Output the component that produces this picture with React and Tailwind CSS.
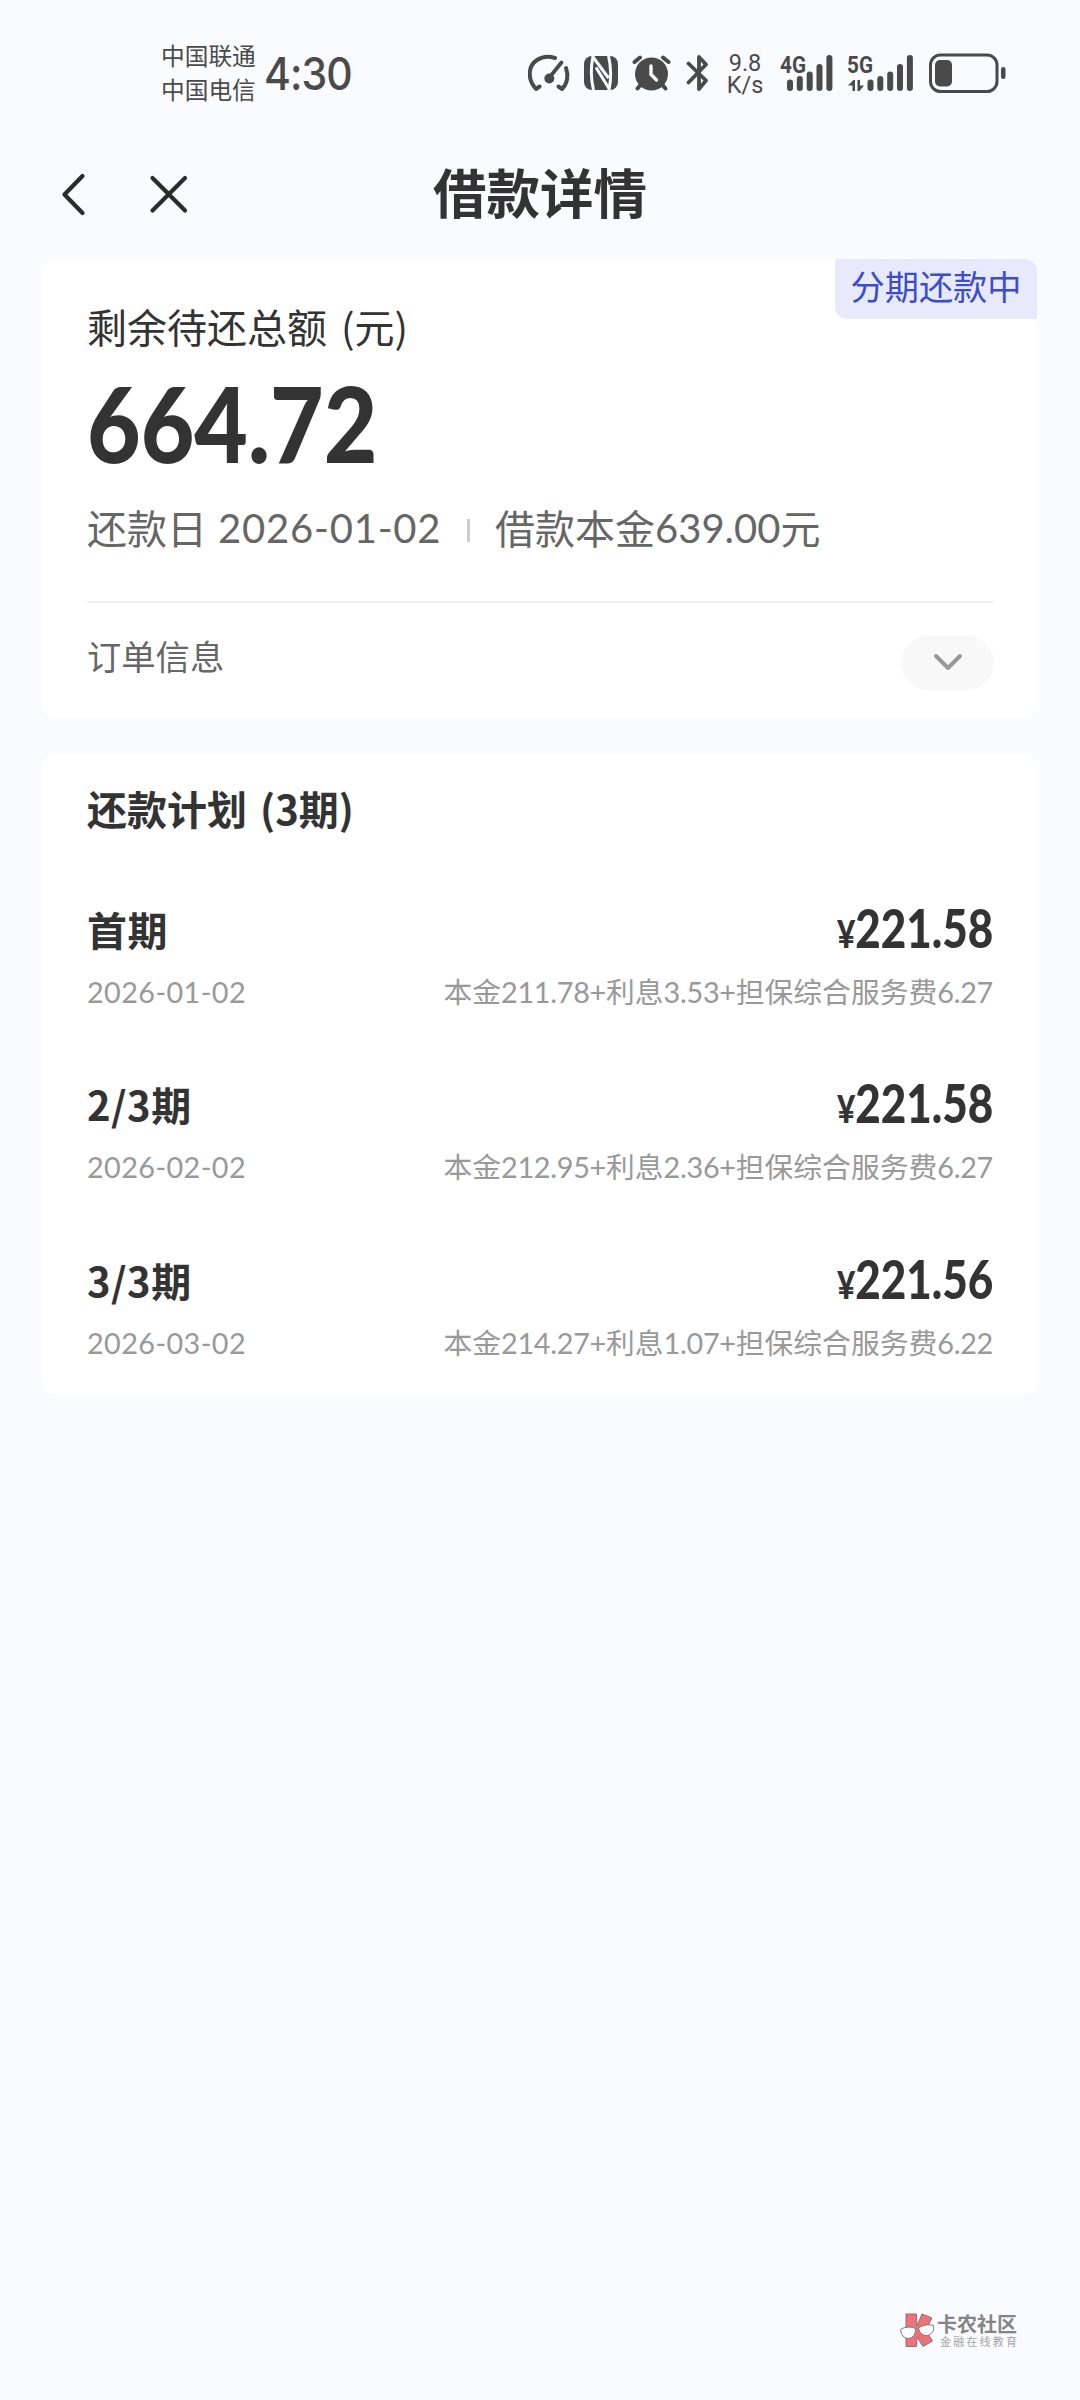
import React from 'react';

const plan = [
  { id: 1, name: '首期', date: '2026-01-02', amount: '221.58', detail: ['本金', '211.78+', '利息', '3.53+', '担保综合服务费', '6.27'] },
  { id: 2, name: '2/3期', date: '2026-02-02', amount: '221.58', detail: ['本金', '212.95+', '利息', '2.36+', '担保综合服务费', '6.27'] },
  { id: 3, name: '3/3期', date: '2026-03-02', amount: '221.56', detail: ['本金', '214.27+', '利息', '1.07+', '担保综合服务费', '6.22'] },
];

const SpeedIcon = () => (
  <svg width="44" height="40" viewBox="0 0 44 40" fill="none" stroke="#4a4a4a" strokeWidth="4" strokeLinecap="round" strokeLinejoin="round">
    <path d="M11.5 33.5 L8 36 C-1 26 0 13 9 7 C15 3 21 3 27 5" />
    <path d="M38 15 C41 23 39 31 34 36 L30.500 33.500" />
    <path d="M21 25 L33.500 9.500" strokeWidth="3.8" />
    <circle cx="21.3" cy="25.500" r="3" fill="#4a4a4a" />
  </svg>
);

const NfcIcon = () => (
  <svg width="34" height="40" viewBox="0 0 34 40" fill="none">
    <rect y="3" width="34" height="34" rx="8" fill="#4a4a4a" />
    <g stroke="#fafbff" strokeWidth="3">
      <path d="M9 3 C6.800 14 6.800 26 9.500 37" />
      <path d="M24.500 3 C27.200 14 27.200 26 25 37" />
      <path d="M9 4 L24.500 25" />
      <path d="M12 14.500 L25 35.500" />
    </g>
  </svg>
);

const AlarmIcon = () => (
  <svg width="40" height="40" viewBox="0 0 40 40" fill="none" stroke="#4a4a4a" strokeWidth="4" strokeLinecap="round">
    <circle cx="19.5" cy="21" r="16.5" fill="#4a4a4a" stroke="none" />
    <path d="M2.5 9 L8 4.500 M36.500 9 L31 4.500" />
    <path d="M8.500 32 L5.500 35.500 M30.500 32 L33.500 35.500" />
    <path d="M19 13 V21.500 L24.500 27" stroke="#fafbff" strokeWidth="3.4" />
  </svg>
);

const BluetoothIcon = () => (
  <svg width="24" height="40" viewBox="0 0 24 40" fill="none" stroke="#4a4a4a" strokeWidth="3.8" strokeLinecap="round" strokeLinejoin="round">
    <path d="M2.500 10.500 L20 27.500 L13 36 V4 L20 11.500 L2.500 29.500" />
  </svg>
);

const bars = [
  { x: 0, top: 26.500 },
  { x: 9.800, top: 23 },
  { x: 19.700, top: 18.500 },
  { x: 29.500, top: 11 },
  { x: 39.400, top: 2 },
];

const Signal = ({ label, arrows }) => (
  <svg className="-mt-[6px]" width="66" height="46" viewBox="0 -6 66 46" fill="#4a4a4a">
    <text x="0" y="20" fontFamily="Roboto, sans-serif" fontWeight="700" fontSize="24" textLength="26" lengthAdjust="spacingAndGlyphs">
      {label}
    </text>
    {arrows && <path d="M5.500 27 V38 H8 V27 L6.500 27 L1 32.500 H5.500 Z M10.500 27 H13 V32.500 H17 L12.500 38 H10.500 Z" />}
    {bars.map((b) => (
      <rect key={b.x} x={b.x + (arrows ? 20.500 : 7)} y={b.top} width="6" height={38 - b.top} rx="3" />
    ))}
  </svg>
);

const BatteryIcon = () => (
  <svg width="79" height="40" viewBox="0 0 79 40" fill="none">
    <rect x="2.500" y="2" width="66.500" height="36.500" rx="10" stroke="#4a4a4a" strokeWidth="3" />
    <rect x="7" y="7" width="17" height="26.500" rx="5" fill="#4a4a4a" />
    <rect x="73" y="14" width="4.500" height="12" rx="2.200" fill="#4a4a4a" />
  </svg>
);

const StatusBar = () => (
  <div className="flex h-[144px] items-start pl-[161px] pt-[38px] text-[#4a4a4a]">
    <div className="w-[103px] whitespace-nowrap text-[23.700px] leading-[34px]">
      <div>中国联通</div>
      <div>中国电信</div>
    </div>
    <div className="w-[264px] pt-[2px] font-['Inter','Noto_Sans_CJK_SC',sans-serif] text-[45px] font-medium leading-[68px]">
      <span className="inline-block origin-left scale-x-[0.91] tracking-[-1px]">4:30</span>
    </div>
    <div className="flex pt-[15px]">
      <SpeedIcon />
      <div className="ml-[12px]"><NfcIcon /></div>
      <div className="ml-[14px]"><AlarmIcon /></div>
      <div className="ml-[14px]"><BluetoothIcon /></div>
      <div className="-mt-[1px] ml-[16px] w-[38px] text-center font-['Roboto',sans-serif] text-[23.500px] leading-[22px]">
        <div>9.8</div>
        <div>K/s</div>
      </div>
      <div className="ml-[16px]"><Signal label="4G" /></div>
      <div className="ml-[1px]"><Signal label="5G" arrows /></div>
      <div className="ml-[15px]"><BatteryIcon /></div>
    </div>
  </div>
);

const NavBar = () => (
  <div className="grid h-[115px] grid-cols-3 items-start">
    <div className="flex pl-[60px] pt-[28px]">
      <svg width="28" height="44" viewBox="0 0 28 44" fill="none" stroke="#2b2b2b" strokeWidth="4.200" strokeLinecap="round" strokeLinejoin="round">
        <path d="M22.500 4 L4.500 22.500 L22.500 41" />
      </svg>
      <svg className="ml-[61px]" width="40" height="44" viewBox="0 0 40 44" fill="none" stroke="#2b2b2b" strokeWidth="4.200" strokeLinecap="round">
        <path d="M3.500 6 L36 38.500 M36 6 L3.500 38.500" />
      </svg>
    </div>
    <h1 className="pt-[15px] text-center text-[53.500px] font-bold leading-[64px]">借款详情</h1>
  </div>
);

const Summary = () => (
  <section className="relative h-[459px] rounded-xl bg-white pl-[45px] pr-[43px] pt-[42px]">
    <div className="absolute right-0 top-0 h-[60px] w-[202px] rounded-bl-xl rounded-tr-xl bg-[#e8eafc] text-center text-[34.200px] leading-[52px] text-[#3a4dcb]">
      分期还款中
    </div>
    <p className="text-[40px] leading-[50px] [word-spacing:5px]">剩余待还总额 (元)</p>
    <p className="mt-[19px] h-[106px] font-['Lato',sans-serif] text-[104px] font-black leading-[106px]">
      <span className="inline-block origin-left scale-x-[0.89]">664.72</span>
    </p>
    <div className="mt-[26px] flex h-[50px] items-center whitespace-nowrap text-[40px] leading-[50px] text-[#666]">
      <span>还款日</span>
      <span className="ml-[11px] w-[249px] pt-[2px] font-['Lato',sans-serif] tracking-[0.800px]">2026-01-02</span>
      <span className="mt-[7px] h-[23px] w-[3px] bg-[#ccc]" />
      <span className="ml-[25px]">借款本金</span>
      <span className="pt-[2px] font-['Lato',sans-serif]">639.00</span>
      <span>元</span>
    </div>
    <div className="mt-[49px] flex justify-between border-t-2 border-[#f2f2f2] pt-[32px]">
      <span className="-mt-[2px] text-[34.300px] leading-[44px] text-[#666]">订单信息</span>
      <button className="mt-px flex h-[54px] w-[93px] justify-center rounded-full bg-[#f8f8f8] pt-[15px]">
        <svg width="30" height="22" viewBox="0 0 30 22" fill="none" stroke="#999" strokeWidth="4" strokeLinecap="round" strokeLinejoin="round">
          <path d="M3 5 L15 17 L27 5" />
        </svg>
      </button>
    </div>
  </section>
);

const PlanRow = ({ item }) => (
  <div className="h-[175.300px]">
    <div className="flex h-[60px] items-center justify-between">
      <span className="ml-px text-[40px] font-bold leading-[60px] tracking-[0.500px]">{item.name}</span>
      <span className="flex origin-right scale-x-[0.83] items-baseline pt-[3px] font-['Lato',sans-serif] font-black leading-[60px]">
        <span className="text-[38px]">¥</span>
        <span className="text-[53px]">{item.amount}</span>
      </span>
    </div>
    <div className="mt-[12px] flex justify-between whitespace-nowrap text-[28.800px] leading-[40px] text-[#999]">
      <span className="ml-px pt-px font-['Lato',sans-serif] tracking-[0.400px]">{item.date}</span>
      <span>
        {item.detail.map((part, i) => (
          <span key={i} className={i % 2 ? "font-['Lato',sans-serif] tracking-[-0.300px]" : ''}>{part}</span>
        ))}
      </span>
    </div>
  </div>
);

const Watermark = () => (
  <div className="absolute left-[899px] top-[2310px] flex text-[#858585]">
    <svg width="37" height="40" viewBox="0 0 37 40" stroke="#777" strokeWidth="1">
      <path d="M7 4 L17.500 4 L18 16 L23 4 L33 8 L26.500 20 L33.500 31 L24 36.500 L18 27 L17.500 36.500 L7 36.500 Z" fill="#f2707a" />
      <path d="M1.500 19.500 C6 16.500 12 16.500 16.500 18.500 C17 24 14 28 9.500 28.500 C5 28.500 2 25 1.500 19.500 Z" fill="#fff" />
      <path d="M19.500 18 C24 15 29.500 14 34.500 15.500 C35.500 20 33 24.500 28.500 25.500 C24 26 20.500 23 19.500 18 Z" fill="#fff" />
    </svg>
    <div className="ml-px whitespace-nowrap">
      <div className="mt-[3px] text-[20px] font-bold leading-[22px]">卡农社区</div>
      <div className="ml-[3px] text-[11px] leading-[13px] tracking-[2.200px] text-[#a5a5a5]">金融在线教育</div>
    </div>
  </div>
);

const App = () => (
  <div className="relative h-[2400px] w-[1080px] overflow-hidden bg-[#fafbff] font-['Noto_Sans_CJK_SC',sans-serif] text-[#333]">
    <StatusBar />
    <NavBar />
    <main className="flex flex-col gap-[36px] pl-[42px] pr-[43px]">
      <Summary />
      <section className="h-[640px] rounded-xl bg-white px-[44px] pt-[28px]">
        <h2 className="mb-[65px] ml-px text-[40px] font-bold leading-[52px] [word-spacing:4px]">还款计划 (3期)</h2>
        {plan.map((item) => (
          <PlanRow key={item.id} item={item} />
        ))}
      </section>
    </main>
    <Watermark />
  </div>
);

export default App;
